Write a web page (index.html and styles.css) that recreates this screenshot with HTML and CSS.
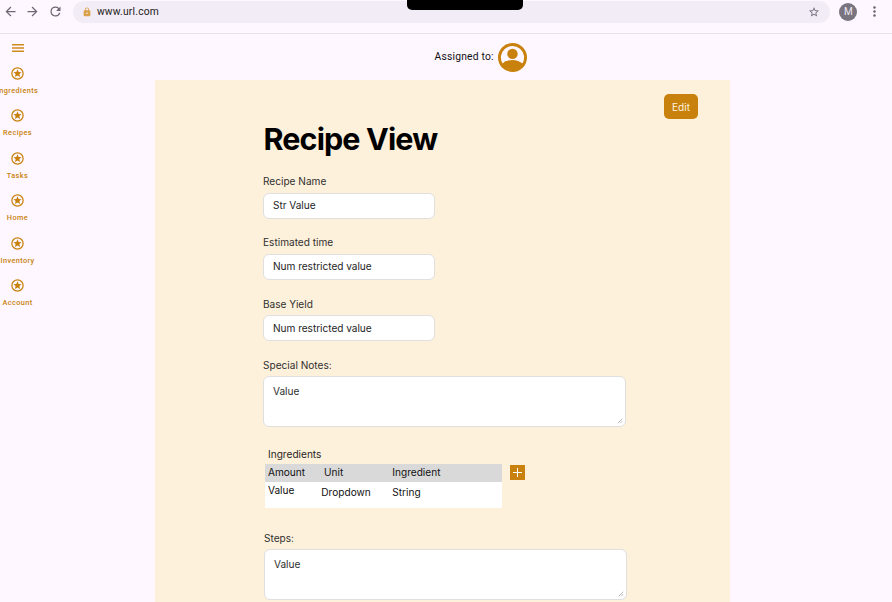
FILE: index.html
```
<!DOCTYPE html>
<html lang="en">
<head>
<meta charset="utf-8">
<title>Recipe View</title>
<link rel="stylesheet" href="styles.css">
</head>
<body>
<svg class="defs" aria-hidden="true">
  <symbol id="star-circle" viewBox="0 0 24 24"><path d="M12 5.200l1.850 4.300 4.650.400-3.500 3.050 1.050 4.550L12 15.100l-4.050 2.400L9 12.950 5.500 9.900l4.650-.400zM12 22a10 10 0 1 1 0-20 10 10 0 0 1 0 20zm0-2a8 8 0 1 0 0-16 8 8 0 0 0 0 16z"/></symbol>
  <symbol id="grip" viewBox="0 0 6 6"><path d="M.8 5.200l4.400-4.400M3.200 5.200l2-2" fill="none" stroke="#999" stroke-width=".7"/></symbol>
</svg>
<header class="toolbar">
  <svg class="tool" viewBox="0 0 24 24"><path d="M20 11H7.830l5.590-5.590L12 4l-8 8 8 8 1.410-1.410L7.830 13H20z"/></svg>
  <svg class="tool" viewBox="0 0 24 24"><path d="m12 4-1.410 1.410L16.170 11H4v2h12.170l-5.580 5.590L12 20l8-8z"/></svg>
  <svg class="tool" viewBox="0 0 24 24"><path d="M17.650 6.350A7.960 7.960 0 0 0 12 4a8 8 0 1 0 7.730 10h-2.080A6 6 0 1 1 12 6c1.660 0 3.140.690 4.220 1.780L13 11h7V4z"/></svg>
  <div class="address">
    <svg class="lock" viewBox="0 0 24 24"><path fill-rule="evenodd" d="M18 8h-1V6A5 5 0 0 0 7 6v2H6a2 2 0 0 0-2 2v10c0 1.100.900 2 2 2h12a2 2 0 0 0 2-2V10a2 2 0 0 0-2-2zm-6 9a2 2 0 1 1 0-4 2 2 0 0 1 0 4zM9 8V6a3 3 0 0 1 6 0v2z"/></svg>
    <span class="url">www.url.com</span>
    <svg class="bookmark" viewBox="0 0 24 24"><path d="m22 9.240-7.190-.620L12 2 9.190 8.630 2 9.240l5.460 4.730L5.820 21 12 17.270 18.180 21l-1.630-7.030zM12 15.400l-3.760 2.270 1-4.280-3.320-2.880 4.380-.380L12 6.100l1.710 4.040 4.380.380-3.320 2.880 1 4.280z"/></svg>
  </div>
  <span class="profile">M</span>
  <svg class="more" viewBox="0 0 24 24"><circle cx="12" cy="4.500" r="2.300"/><circle cx="12" cy="12" r="2.300"/><circle cx="12" cy="19.500" r="2.300"/></svg>
  <div class="notch"></div>
</header>
<div class="page">
  <nav class="rail">
    <svg class="menu" viewBox="0 0 12 8"><path d="M0 .7h12M0 4h12M0 7.300h12"/></svg>
    <a class="item"><svg><use href="#star-circle"/></svg><span>Ingredients</span></a>
    <a class="item"><svg><use href="#star-circle"/></svg><span>Recipes</span></a>
    <a class="item"><svg><use href="#star-circle"/></svg><span>Tasks</span></a>
    <a class="item"><svg><use href="#star-circle"/></svg><span>Home</span></a>
    <a class="item"><svg><use href="#star-circle"/></svg><span>Inventory</span></a>
    <a class="item"><svg><use href="#star-circle"/></svg><span>Account</span></a>
  </nav>
  <div class="content">
    <div class="assigned">
      <span>Assigned to:</span>
      <svg viewBox="2 2 20 20"><path d="M12 2a10 10 0 1 0 0 20 10 10 0 0 0 0-20zM6.600 17.900a8.950 8.950 0 0 1 10.800 0 7.900 7.900 0 0 1-10.800 0zm12.200-1.700a10.950 10.950 0 0 0-13.600 0A8 8 0 1 1 18.800 16.200z"/><path d="M5.200 16.200a10.950 10.950 0 0 1 13.600 0l-1.400 2.500-5.400 2-5.400-2z"/><circle cx="12" cy="9.500" r="3.600"/></svg>
    </div>
    <main class="card">
      <div class="actions"><button class="edit">Edit</button></div>
      <h1>Recipe View</h1>
      <div class="field"><label>Recipe Name</label><div class="input">Str Value</div></div>
      <div class="field"><label>Estimated time</label><div class="input">Num restricted value</div></div>
      <div class="field"><label>Base Yield</label><div class="input">Num restricted value</div></div>
      <div class="field notes"><label>Special Notes:</label><div class="input area">Value<svg class="grip"><use href="#grip"/></svg></div></div>
      <section class="ingredients">
        <h2>Ingredients</h2>
        <div class="table-row">
          <div class="table">
            <div class="row head"><span>Amount</span><span class="unit">Unit</span><span class="name">Ingredient</span></div>
            <div class="row body"><span class="amount">Value</span><span>Dropdown</span><span>String</span></div>
          </div>
          <button class="add" aria-label="Add ingredient"><svg viewBox="0 0 15 15"><path d="M7.500 3v9M3 7.500h9"/></svg></button>
        </div>
      </section>
      <div class="field steps"><label>Steps:</label><div class="input area">Value<svg class="grip"><use href="#grip"/></svg></div></div>
    </main>
  </div>
</div>
</body>
</html>
```
FILE: styles.css
```
* { box-sizing: border-box; }
body {
  margin: 0;
  height: 602px;
  overflow: hidden;
  background: #fef7ff;
  color: #111;
  font: 10.100px/14px Inter, sans-serif;
}
svg { display: block; flex: none; }
button { border: 0; padding: 0; font: inherit; }
.defs { position: absolute; width: 0; height: 0; }

.toolbar {
  position: relative;
  display: flex;
  align-items: center;
  height: 34px;
  padding: 0 9px 10px 3px;
  border-bottom: 1px solid #e8e0eb;
}
.tool { width: 15px; height: 15px; margin-right: 7.300px; fill: #6e6974; }
.address {
  display: flex;
  align-items: center;
  width: 757px;
  height: 22px;
  margin-left: 3px;
  padding: 0 10px 0 9px;
  border-radius: 11px;
  background: #f2ecf6;
}
.lock { width: 10px; height: 10px; fill: #dba149; }
.url { margin-left: 5px; font: 10.300px/14px Roboto, sans-serif; letter-spacing: .2px; color: #1d1b20; }
.bookmark { width: 12px; height: 12px; margin-left: auto; fill: #6e6974; }
.profile {
  width: 18px;
  height: 18px;
  margin-left: 9.500px;
  border-radius: 50%;
  background: #79747e;
  color: #eee8f2;
  font: 10px/18px Roboto, sans-serif;
  text-align: center;
}
.more { width: 13px; height: 13px; margin-left: 11px; fill: #66616b; }
.notch {
  position: absolute;
  left: 407px;
  top: 0;
  width: 116px;
  height: 10px;
  border-radius: 0 0 5px 5px;
  background: #000;
}

.page { display: flex; height: 568px; }
.rail { display: flex; flex-direction: column; align-items: center; width: 35px; padding-top: 10px; }
.menu { width: 12px; height: 8px; stroke: #d08b1e; stroke-width: 1.500; }
.item { display: flex; flex-direction: column; align-items: center; height: 42.500px; color: #c8810c; }
.item:first-of-type { margin-top: 13.500px; }
.item svg { width: 15px; height: 15px; fill: #c8810c; }
.item span { margin-top: 5px; font: 500 7.300px/10px Roboto, sans-serif; letter-spacing: .42px; white-space: nowrap; }

.content { width: 575px; margin-left: 120px; }
.assigned {
  display: flex;
  align-items: center;
  height: 46px;
  padding-left: 279.500px;
  font: 10.300px/14px Roboto, sans-serif;
  letter-spacing: .2px;
}
.assigned svg { width: 29px; height: 29px; margin-left: 4.500px; fill: #c8810c; }

.card { height: 522px; padding: 14px 0 0 108px; background: #fef1db; }
.actions { display: flex; justify-content: flex-end; padding-right: 32px; }
.edit { width: 34px; height: 25px; border-radius: 5px; background: #c8810c; color: #fff3df; }
h1 { margin: 2px 0 17px .5px; color: #000; font-size: 30.500px; line-height: 36px; font-weight: 700; letter-spacing: -.88px; }
.field { height: 61.300px; color: #303030; }
.field label { display: block; margin-bottom: 4.500px; }
.input {
  display: flex;
  align-items: center;
  width: 172px;
  height: 26px;
  padding: 0 9px 1px;
  border: 1px solid #dfdfdf;
  border-radius: 6px;
  background: #fff;
  color: #1e1e1e;
  letter-spacing: -.03px;
}
.area { position: relative; align-items: flex-start; width: 363px; height: 51px; padding-top: 7px; color: #303030; }
.grip { position: absolute; right: 2px; bottom: 2px; width: 6px; height: 6px; }
.notes { height: 69px; }

.ingredients { margin-top: 20px; padding-left: 2px; }
h2 { margin: 0 0 3px 3px; font-size: inherit; line-height: 14px; font-weight: 400; color: #1e1e1e; }
.table-row { display: flex; }
.table { width: 237px; }
.row { display: grid; grid-template-columns: 53.300px 71px 1fr; padding-left: 3px; }
.head { height: 18px; padding-top: 1.500px; background: #d9d9d9; }
.head .unit { padding-left: 2.700px; }
.head .name { margin-top: -.5px; }
.body { height: 26px; padding-top: 3px; background: #fff; }
.body .amount { margin-top: -2px; }
.add { width: 15px; height: 15px; margin: 1px 0 0 8px; background: #c8810c; }
.add svg { width: 15px; height: 15px; stroke: #fff; stroke-width: 1; }
.steps { margin: 23px 0 0 1px; }
```
